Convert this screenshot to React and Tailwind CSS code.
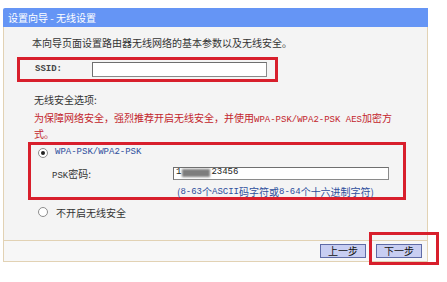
const cjk = { fontFamily: '"Noto Sans CJK SC", "Noto Sans", sans-serif' }
const mono = { fontFamily: '"Liberation Mono", "Noto Sans CJK SC", monospace' }

function Radio({ checked }) {
  return (
    <span className="w-[10px] h-[10px] rounded-full border border-[#8d8d8d] bg-white flex items-center justify-center shrink-0">
      {checked && <span className="w-[4px] h-[4px] rounded-full bg-[#222]" />}
    </span>
  )
}

function StepButton({ children }) {
  return (
    <button className="w-[46px] h-[14px] bg-[#c8cef2] border border-[#5f6ba6] text-[10px] leading-[12px] text-[#111] flex items-center justify-center">
      {children}
    </button>
  )
}

export default function App() {
  return (
    <div className="w-[447px] h-[282px] bg-white pt-[8px] pl-[3px] text-[#333]" style={cjk}>
      <div className="w-[425px] flex flex-col">
        <div className="h-[19px] bg-[#6595f5] text-white text-[10px] leading-[19px] pl-[5px] rounded-tl-[2px]">
          设置向导 - 无线设置
        </div>

        <div className="h-[213px] bg-[#f4f4f4] border-x border-[#e2d2b4] flex flex-col text-[10px]">
          <p className="ml-[28px] mt-[9px] h-[14px] leading-[14px]">
            本向导页面设置路由器无线网络的基本参数以及无线安全。
          </p>

          <div className="mt-[7px] ml-[13px] w-[261px] h-[25px] border-[3px] border-[#d81f2c] flex items-center">
            <span className="ml-[15px] w-[57px] text-[9px] font-bold text-[#444]" style={mono}>
              SSID:
            </span>
            <span className="w-[175px] h-[15px] bg-white border border-[#8a8a8a] border-t-[#6f6f6f] border-l-[#6f6f6f]" />
          </div>

          <p className="ml-[30px] mt-[11px] h-[14px] leading-[14px]">无线安全选项:</p>
          <p className="ml-[30px] mt-[4px] h-[28px] leading-[14px] text-[#c3242c]">
            <span className="whitespace-nowrap">
              为保障网络安全，强烈推荐开启无线安全，并使用
              <span className="text-[9px]" style={mono}>WPA-PSK/WPA2-PSK AES</span>
              加密方
            </span>
            <br />
            式。
          </p>

          <div className="mt-[3px] ml-[24px] w-[378px] h-[58px] border-[3px] border-[#d81f2c] flex flex-col">
            <div className="mt-[1px] ml-[7px] h-[14px] flex items-center gap-[7px]">
              <Radio checked />
              <span className="text-[9px] text-[#2e4f9d]" style={mono}>WPA-PSK/WPA2-PSK</span>
            </div>
            <div className="mt-[7px] ml-[21px] h-[13px] flex items-center">
              <span className="w-[121px] h-[13px] leading-[13px]">
                <span className="text-[9px]" style={mono}>PSK</span>密码:
              </span>
              <span className="w-[216px] h-[13px] bg-white border border-[#8a8a8a] border-t-[#6f6f6f] border-l-[#6f6f6f] flex items-center pl-[2px] text-[9px] text-[#222]" style={mono}>
                1
                <span className="w-[28px] h-[8px] bg-[#7d7d7d] blur-[1px] mx-[1px]" />
                23456
              </span>
            </div>
            <p className="mt-[6px] ml-[146px] h-[12px] leading-[12px] text-[#2e4f9d] whitespace-nowrap flex items-center">
              (<span className="text-[9px]" style={mono}>8-63</span>个<span className="text-[9px]" style={mono}>ASCII</span>码字符或<span className="text-[9px]" style={mono}>8-64</span>个十六进制字符)
            </p>
          </div>

          <div className="mt-[5px] ml-[34px] h-[14px] flex items-center gap-[8px]">
            <Radio />
            <span>不开启无线安全</span>
          </div>
        </div>

        <div className="h-[22px] bg-[#f7f7f7] border border-[#e2d2b4] flex items-center justify-end gap-[10px] pr-[5px]">
          <StepButton>上一步</StepButton>
          <div className="relative">
            <StepButton>下一步</StepButton>
            <span className="absolute left-[-7px] top-[-12px] w-[70px] h-[33px] border-[3px] border-[#d81f2c]" />
          </div>
        </div>
      </div>
    </div>
  )
}
